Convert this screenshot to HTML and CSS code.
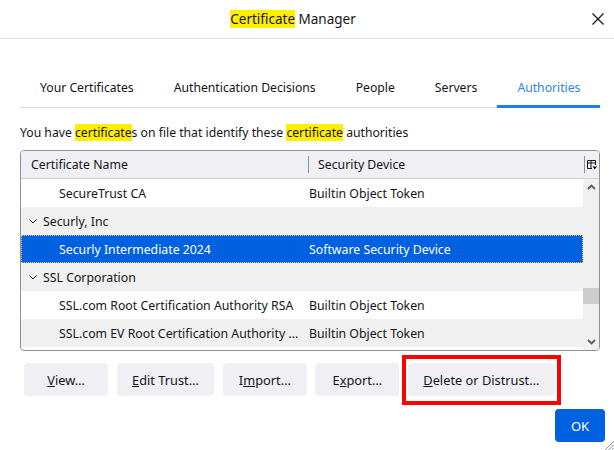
FILE: index.html
```html
<!DOCTYPE html>
<html lang="en">
<head>
<meta charset="utf-8">
<title>Certificate Manager</title>
<link rel="stylesheet" href="styles.css">
</head>
<body>
<div class="window">
  <header class="titlebar">
    <h1 class="title"><mark>Certificate</mark> Manager</h1>
    <button class="close" aria-label="Close">
      <svg width="12" height="12" viewBox="0 0 12 12"><path d="M0.5 0.5 L11.5 11.5 M11.5 0.5 L0.5 11.5" stroke="#15141a" stroke-width="1.2" fill="none"/></svg>
    </button>
  </header>

  <nav class="tabs">
    <div class="tab">Your Certificates</div>
    <div class="tab">Authentication Decisions</div>
    <div class="tab">People</div>
    <div class="tab">Servers</div>
    <div class="tab active">Authorities</div>
  </nav>

  <p class="desc">You have <mark>certificate</mark>s on file that identify these <mark>certificate</mark> authorities</p>

  <div class="tree">
    <div class="tree-head">
      <div class="col-name">Certificate Name</div>
      <div class="col-dev">Security Device</div>
      <div class="picker">
        <svg width="10" height="10" viewBox="0 0 10 10"><path d="M0.5 0.5 H8.5 V5 M0.5 0.5 V8.5 H5 M0.5 3 H8.5 M4 0.5 V8.5" stroke="#15141a" stroke-width="1" fill="none"/><path d="M5.5 6.5 H10 L7.75 9.5 Z" fill="#15141a"/></svg>
      </div>
    </div>
    <div class="tree-body">
      <div class="rows">
        <div class="row"><span class="c1">SecureTrust CA</span><span class="c2">Builtin Object Token</span></div>
        <div class="row group"><span class="c1"><svg class="twisty" width="8" height="5" viewBox="0 0 8 5"><path d="M0.5 0.5 L4 4 L7.5 0.5" stroke="#15141a" stroke-width="1" fill="none"/></svg>Securly, Inc</span><span class="c2"></span></div>
        <div class="row selected"><span class="c1">Securly Intermediate 2024</span><span class="c2">Software Security Device</span></div>
        <div class="row group"><span class="c1"><svg class="twisty" width="8" height="5" viewBox="0 0 8 5"><path d="M0.5 0.5 L4 4 L7.5 0.5" stroke="#15141a" stroke-width="1" fill="none"/></svg>SSL Corporation</span><span class="c2"></span></div>
        <div class="row"><span class="c1">SSL.com Root Certification Authority RSA</span><span class="c2">Builtin Object Token</span></div>
        <div class="row"><span class="c1">SSL.com EV Root Certification Authority ...</span><span class="c2">Builtin Object Token</span></div>
        <div class="row"><span class="c1">SSL.com EV Root Certification Authority RSA R2</span><span class="c2">Builtin Object Token</span></div>
      </div>
      <div class="scrollbar">
        <div class="arrow">
          <svg width="9" height="6" viewBox="0 0 9 6"><path d="M1 5 L4.5 1.5 L8 5" stroke="#5b5b66" stroke-width="1.8" fill="none"/></svg>
        </div>
        <div class="track"><div class="thumb"></div></div>
        <div class="arrow">
          <svg width="9" height="6" viewBox="0 0 9 6"><path d="M1 1 L4.5 4.5 L8 1" stroke="#5b5b66" stroke-width="1.8" fill="none"/></svg>
        </div>
      </div>
    </div>
  </div>

  <div class="actions">
    <button class="btn"><u>V</u>iew…</button>
    <button class="btn"><u>E</u>dit Trust…</button>
    <button class="btn">I<u>m</u>port…</button>
    <button class="btn">E<u>x</u>port…</button>
    <button class="btn marked"><u>D</u>elete or Distrust…</button>
  </div>

  <div class="footer">
    <button class="ok">OK</button>
  </div>

  <svg class="grip" width="10" height="10" viewBox="0 0 10 10"><path d="M10 1 L1 10 M10 4.5 L4.5 10 M10 8 L8 10" stroke="#8f8f9d" stroke-width="1" fill="none"/></svg>
</div>
</body>
</html>
```

FILE: styles.css
```css
* {
  box-sizing: border-box;
}

html, body {
  margin: 0;
  padding: 0;
  background: #ffffff;
}

body {
  width: 614px;
  height: 450px;
  overflow: hidden;
  font-family: "Noto Sans", "Open Sans", sans-serif;
  font-size: 12.3px;
  color: #15141a;
}

.window {
  position: relative;
  height: 450px;
  display: flex;
  flex-direction: column;
}

mark {
  background: #ffee00;
  color: inherit;
}

.titlebar {
  height: 39px;
  flex: none;
  display: flex;
  align-items: center;
  border-bottom: 1px solid #e0e0e6;
}

.title {
  flex: 1;
  margin: 0;
  text-align: center;
  font-size: 13.5px;
  font-weight: normal;
}

.close {
  width: 23px;
  height: 38px;
  margin-right: 5px;
  padding: 0;
  border: 0;
  background: none;
  display: flex;
  align-items: center;
  justify-content: center;
}

.tabs {
  display: flex;
  margin: 29px 14px 0 20px;
  border-bottom: 1px solid #d7d7db;
}

.tab {
  height: 40px;
  line-height: 40px;
  padding: 0 20px;
  margin-bottom: -1px;
  border-bottom: 3px solid transparent;
  font-size: 12.2px;
  white-space: nowrap;
}

.tab.active {
  color: #2f86e8;
  border-bottom-color: #1c7ff0;
}

.desc {
  margin: 16px 20px 0;
  line-height: 18px;
  font-size: 12.2px;
  white-space: nowrap;
}

.tree {
  margin: 8px 14px 0 20px;
  height: 201px;
  border: 1px solid #8f8f9d;
  border-radius: 4px;
  overflow: hidden;
  display: flex;
  flex-direction: column;
}

.tree-head {
  height: 28px;
  flex: none;
  display: flex;
  align-items: center;
  background: #f0f0f4;
  border-bottom: 1px solid #cfcfd8;
}

.col-name {
  width: 287px;
  padding-left: 10px;
}

.col-dev {
  flex: 1;
  height: 17px;
  line-height: 17px;
  padding-left: 9px;
  border-left: 1px solid #8f8f9d;
}

.picker {
  width: 15px;
  height: 17px;
  border-left: 1px solid #8f8f9d;
  display: flex;
  align-items: center;
  justify-content: center;
}

.tree-body {
  flex: 1;
  display: flex;
  overflow: hidden;
}

.rows {
  flex: 1;
}

.row {
  height: 28px;
  display: flex;
  align-items: center;
  white-space: nowrap;
}

.row:nth-child(even) {
  background: #f0f0f0;
}

.row.selected {
  background: #0061e0;
  color: #ffffff;
  outline: 1px dotted #f6c453;
  outline-offset: -1px;
}

.c1 {
  width: 288px;
  padding-left: 38px;
  padding-right: 4px;
  overflow: hidden;
  text-overflow: ellipsis;
}

.group .c1 {
  padding-left: 8px;
  display: flex;
  align-items: center;
  gap: 6px;
}

.c2 {
  flex: 1;
}

.scrollbar {
  width: 16px;
  flex: none;
  background: #f0f0f0;
  display: flex;
  flex-direction: column;
}

.arrow {
  height: 16px;
  display: flex;
  align-items: center;
  justify-content: center;
}

.track {
  flex: 1;
}

.thumb {
  margin-top: 93px;
  height: 16px;
  background: #cdcdcd;
}

.actions {
  display: flex;
  gap: 8.5px;
  margin: 12px 0 0 24px;
}

.btn {
  height: 33px;
  min-width: 84px;
  padding: 0 15.5px;
  border: 0;
  border-radius: 4px;
  background: #f0f0f4;
  font: inherit;
  font-size: 12.8px;
  color: #15141a;
  white-space: nowrap;
}

.btn.marked {
  position: relative;
}

.btn.marked::after {
  content: "";
  position: absolute;
  top: -8px;
  bottom: -9px;
  left: -6px;
  right: -6px;
  border: 4px solid #ff0000;
}

.footer {
  display: flex;
  justify-content: flex-end;
  margin: 13px 9px 0 0;
}

.ok {
  width: 50px;
  height: 33px;
  border: 0;
  border-radius: 4px;
  background: #0061e0;
  color: #ffffff;
  font: inherit;
  font-size: 13px;
}

.grip {
  position: absolute;
  right: 0;
  bottom: 0;
}
```
